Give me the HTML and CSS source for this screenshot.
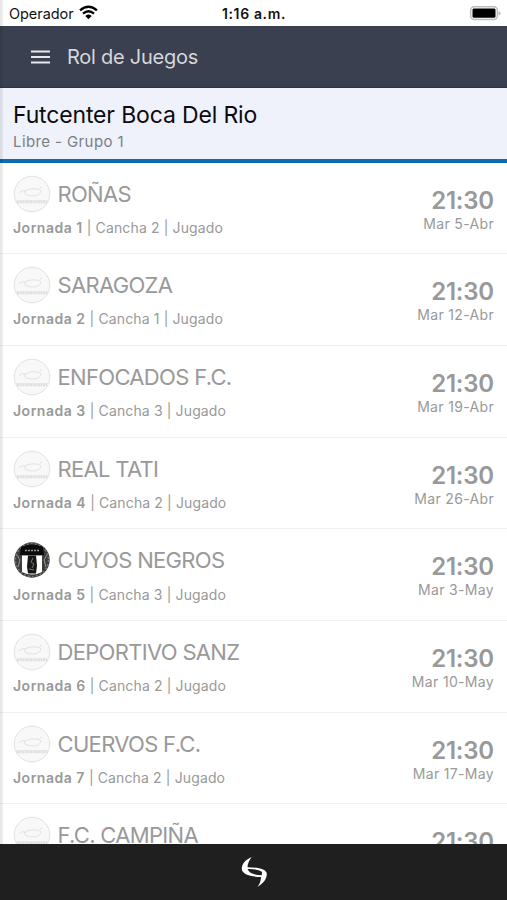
FILE: index.html
```
<!DOCTYPE html>
<html lang="es">
<head>
<meta charset="utf-8">
<title>Rol de Juegos</title>
<link rel="stylesheet" href="styles.css">
</head>
<body>
<svg width="0" height="0" class="defs">
  <symbol id="crest" viewBox="0 0 38 38">
    <circle cx="19" cy="19" r="17.8" fill="#f8f8f8" stroke="#e2e2e2" stroke-width="1"/>
    <path d="M6 17.500l4-2 3 1M11 17c3-4 16-4 17-1-1 5-8 6-14 4q-3-1-3-3M27 13l2-1" fill="none" stroke="#e2e2e2"/>
    <path d="M2 25.500h34" stroke="#e9e9e9"/>
    <path d="M4 27h30" stroke="#dfdfdf" stroke-width="2.500" stroke-dasharray="2 .6"/>
  </symbol>
  <symbol id="cuyos" viewBox="0 0 38 38">
    <circle cx="19" cy="19" r="17.7" fill="#3b3d39"/>
    <circle cx="19" cy="19" r="16.5" fill="none" stroke="#777" stroke-width="1.500" stroke-dasharray="2 2"/>
    <path d="M8 6q11-5 22 0l1 8H7z" fill="#0b0b0b"/>
    <path d="M12 9.500h14" stroke="#999" stroke-width="1.600" stroke-dasharray="2 1"/>
    <path d="M9 14.500h20V31q-10 5-20 0z" fill="#fff"/>
    <path d="M15 14.500h8l1 10-1 8h-8l-1-7z" fill="#171717"/>
    <path d="M20 17l-2 4 3 2-2 4M16 28l5 1" stroke="#777" fill="none"/>
    <path d="M4 14l3 5-2 7M34 14l-3 5 2 7" stroke="#999" fill="none"/>
  </symbol>
</svg>
<div class="app">
  <div class="status">
    <div class="carrier"><span class="operator">Operador</span>
      <svg class="wifi" viewBox="0 0 18 14"><path d="M1 5Q9-2 17 5M3.800 8Q9 3.500 14.200 8" fill="none" stroke="#000" stroke-width="2.300"/><path d="M6 10.200Q9 7.600 12 10.200L9 13.500z"/></svg>
    </div>
    <span class="clock">1:16 a.m.</span>
    <svg class="battery" viewBox="0 0 31 15"><rect x=".7" y=".7" width="26.600" height="12.800" rx="3.500" fill="#fff" stroke="#bdbdbd" stroke-width="1.400"/><rect x="2.500" y="2.500" width="23" height="9.200" rx="1.500"/><path d="M28.500 5q2 .5 2 2.200t-2 2.200z" fill="#bdbdbd"/></svg>
  </div>
  <header class="nav">
    <svg class="menu" viewBox="0 0 19 14"><path d="M0 1.500h19M0 7h19M0 12.500h19" stroke="#e4e7ec" stroke-width="2.200"/></svg>
    <span class="nav-title">Rol de Juegos</span>
  </header>
  <section class="venue">
    <h1>Futcenter Boca Del Rio</h1>
    <p>Libre - Grupo 1</p>
  </section>
  <main class="games">
    <article class="game"><div class="info"><div class="team"><svg><use href="#crest"/></svg><h2>ROÑAS</h2></div><p><b>Jornada 1</b> | Cancha 2 | Jugado</p></div><div class="when"><strong>21:30</strong><span>Mar 5-Abr</span></div></article>
    <article class="game"><div class="info"><div class="team"><svg><use href="#crest"/></svg><h2>SARAGOZA</h2></div><p><b>Jornada 2</b> | Cancha 1 | Jugado</p></div><div class="when"><strong>21:30</strong><span>Mar 12-Abr</span></div></article>
    <article class="game"><div class="info"><div class="team"><svg><use href="#crest"/></svg><h2>ENFOCADOS F.C.</h2></div><p><b>Jornada 3</b> | Cancha 3 | Jugado</p></div><div class="when"><strong>21:30</strong><span>Mar 19-Abr</span></div></article>
    <article class="game"><div class="info"><div class="team"><svg><use href="#crest"/></svg><h2>REAL TATI</h2></div><p><b>Jornada 4</b> | Cancha 2 | Jugado</p></div><div class="when"><strong>21:30</strong><span>Mar 26-Abr</span></div></article>
    <article class="game"><div class="info"><div class="team"><svg><use href="#cuyos"/></svg><h2>CUYOS NEGROS</h2></div><p><b>Jornada 5</b> | Cancha 3 | Jugado</p></div><div class="when"><strong>21:30</strong><span>Mar 3-May</span></div></article>
    <article class="game"><div class="info"><div class="team"><svg><use href="#crest"/></svg><h2>DEPORTIVO SANZ</h2></div><p><b>Jornada 6</b> | Cancha 2 | Jugado</p></div><div class="when"><strong>21:30</strong><span>Mar 10-May</span></div></article>
    <article class="game"><div class="info"><div class="team"><svg><use href="#crest"/></svg><h2>CUERVOS F.C.</h2></div><p><b>Jornada 7</b> | Cancha 2 | Jugado</p></div><div class="when"><strong>21:30</strong><span>Mar 17-May</span></div></article>
    <article class="game"><div class="info"><div class="team"><svg><use href="#crest"/></svg><h2>F.C. CAMPIÑA</h2></div></div><div class="when"><strong>21:30</strong></div></article>
  </main>
  <footer class="bottom">
    <svg class="logo" viewBox="0 0 26 32"><path fill="#fff" fill-rule="evenodd" d="M10.700 1C4 4 .8 8 .8 13c0 5 9 8 19.200 8 0 4-1.500 7-3.500 10 6-4 9.300-8 9.300-13 0-5-9.800-6.700-19.300-6.700 0-3.500 1.700-7.300 4.200-10.300zM6.500 13c4-.5 11.500.5 14.500 3l-.2 3.300C14 19 8 17.500 6.500 13z"/></svg>
  </footer>
</div>
</body>
</html>
```
FILE: styles.css
```
* { box-sizing: border-box; margin: 0; padding: 0; }
body { font-family: Inter, "Liberation Sans", sans-serif; background: #fff; overflow: hidden; }
.defs { display: none; }
.app { width: 507px; height: 900px; display: flex; flex-direction: column; overflow: hidden; position: relative; }
.app::before { content: ""; position: absolute; left: 0; top: 0; width: 3px; height: 844px; background: linear-gradient(90deg, rgba(0,0,0,.1), rgba(0,0,0,.06)); z-index: 1; }
.status { flex: none; height: 25.5px; display: grid; grid-template-columns: 1fr auto 1fr; align-items: center; padding: 2px 6px 0 9px; color: #111; }
.carrier { display: flex; align-items: center; gap: 5px; }
.operator { font-size: 14.5px; letter-spacing: -.05px; }
.wifi { width: 19px; height: 15px; margin-top: -2px; }
.clock { font-size: 14px; font-weight: 600; letter-spacing: .65px; margin-right: 2px; }
.battery { width: 31px; height: 15px; justify-self: end; }
.nav { flex: none; height: 62px; background: #3a404f; display: flex; align-items: center; padding: 2px 0 0 30.5px; border-bottom: 1px solid #2d3341; }
.menu { width: 19px; height: 14px; margin-right: 17.5px; }
.nav-title { font-size: 20px; letter-spacing: -.25px; color: #d5d7db; }
.venue { flex: none; height: 75px; background: #eff2fb; border-bottom: 4px solid #0c6cb0; padding: 13px 13px 0; }
.venue h1 { font-size: 23px; letter-spacing: -.15px; line-height: 28px; font-weight: 400; color: #0b0b0f; white-space: nowrap; }
.venue p { font-size: 15px; letter-spacing: .4px; line-height: 20px; color: #7b7d84; margin-top: 3px; }
.games { flex: 1; min-height: 0; overflow: hidden; color: #999; }
.game { height: 91.7px; display: flex; justify-content: space-between; padding: 12px 13px 0; border-bottom: 1px solid #f1f1f1; }
.team { display: flex; align-items: center; gap: 7px; height: 38px; }
.team svg { width: 38px; height: 38px; margin-left: -.5px; }
.team h2 { font-size: 22px; letter-spacing: -.68px; font-weight: 400; white-space: nowrap; }
.info p { font-size: 14px; letter-spacing: .13px; line-height: 18px; margin-top: 6.3px; }
.info b { font-weight: 600; letter-spacing: .5px; }
.when { display: flex; flex-direction: column; align-items: flex-end; padding-top: 12px; }
.when strong { font-size: 24px; letter-spacing: -.2px; line-height: 28px; font-weight: 600; }
.when span { font-size: 14px; letter-spacing: .33px; line-height: 18px; }
.bottom { flex: none; height: 56.5px; background: #1f1f1f; display: flex; justify-content: center; align-items: center; }
.logo { width: 26px; height: 32px; }
```
